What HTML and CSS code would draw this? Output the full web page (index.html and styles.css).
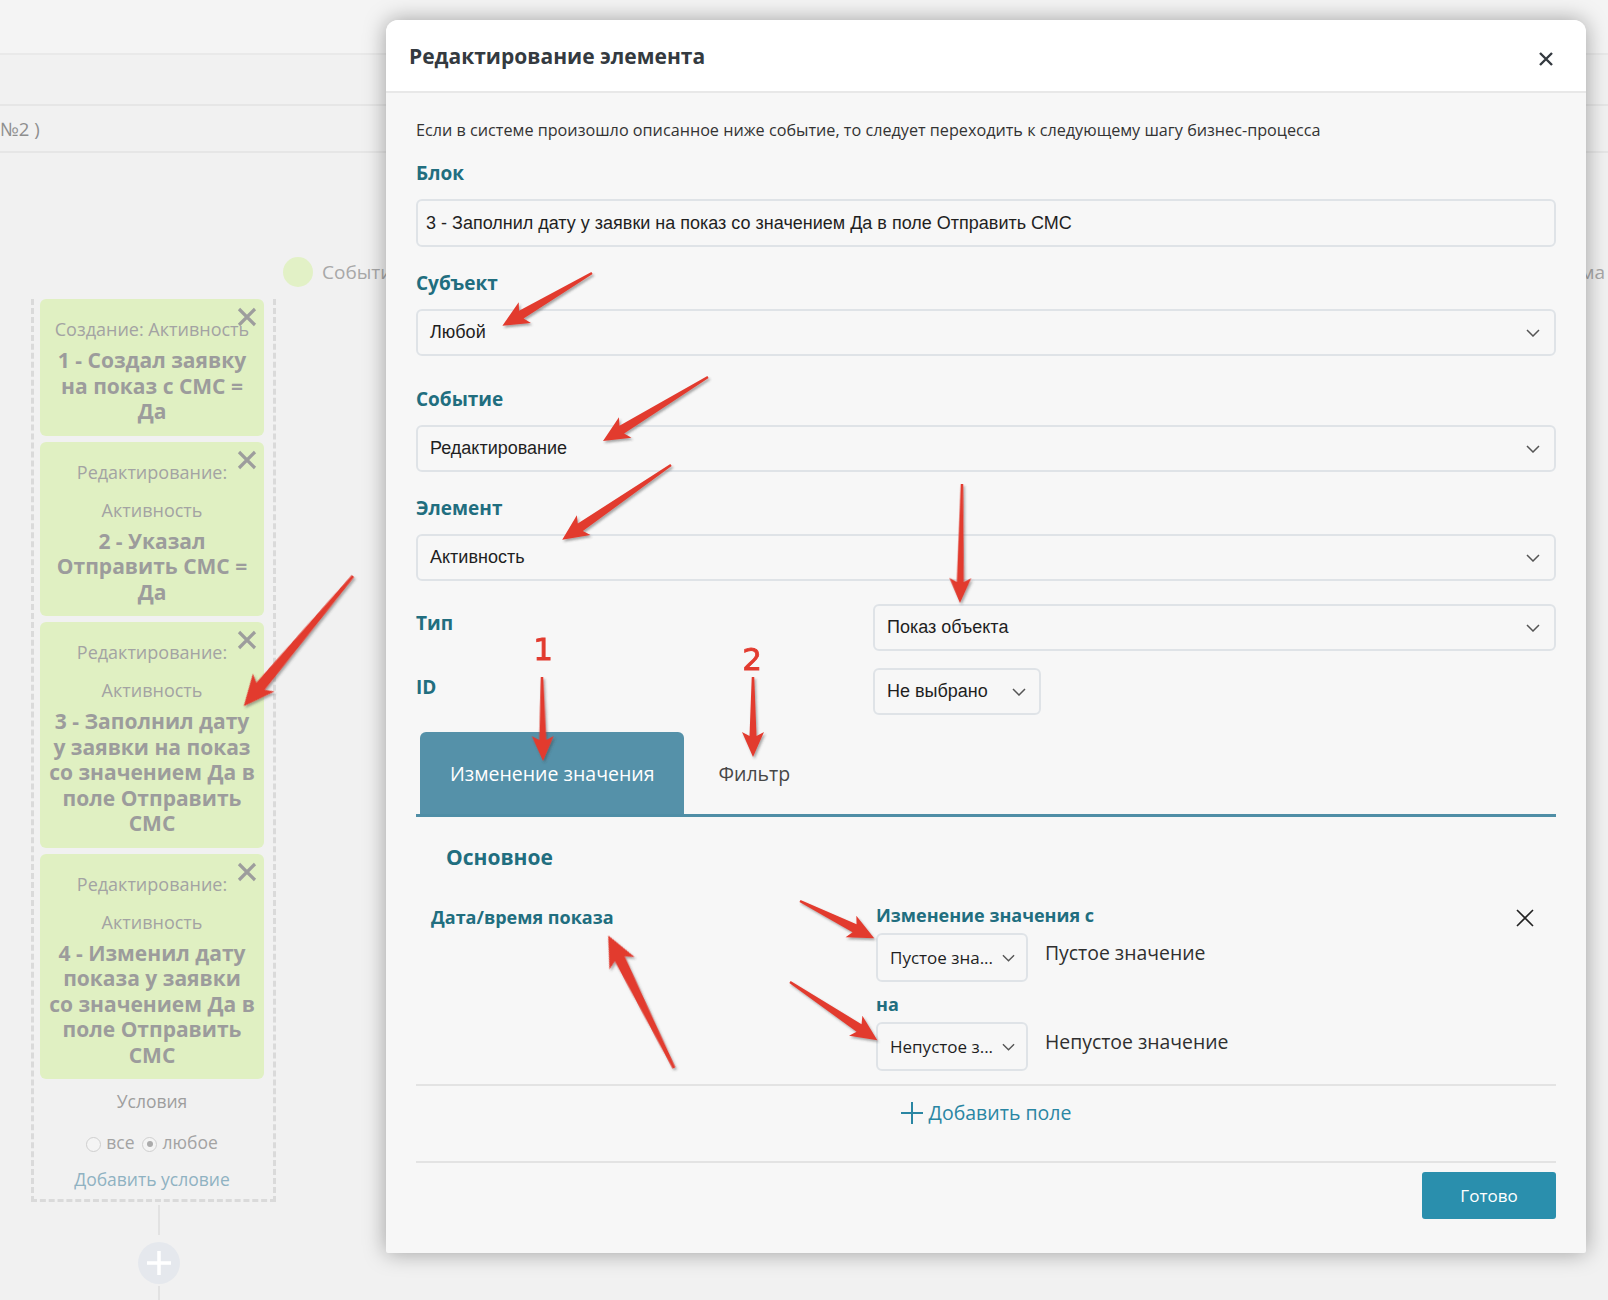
FILE: index.html
```html
<!DOCTYPE html>
<html lang="ru">
  <head>
    <meta charset="UTF-8" />
    <meta name="viewport" content="width=device-width, initial-scale=1.0" />
    <title>Редактирование элемента</title>
    <link rel="stylesheet" href="styles.css">
  </head>
  <body>
    <div class="app">
      <div class="topbar"></div>
      <div class="toolbar"></div>
      <div class="crumbs">№2 )</div>

      <div class="canvas">
        <div class="legend">
          <span class="legend-dot"></span>
          <span class="legend-text">События</span>
          <span class="legend-right">Схема</span>
        </div>

        <div class="column">
          <div class="card">
            <svg class="card-close" width="20" height="20" viewBox="0 0 20 20"><path d="M2 2L18 18M18 2L2 18" /></svg>
            <div class="card-sub">Создание: Активность</div>
            <div class="card-title">1 - Создал заявку на показ с СМС = Да</div>
          </div>
          <div class="card">
            <svg class="card-close" width="20" height="20" viewBox="0 0 20 20"><path d="M2 2L18 18M18 2L2 18" /></svg>
            <div class="card-sub">Редактирование: Активность</div>
            <div class="card-title">2 - Указал Отправить СМС = Да</div>
          </div>
          <div class="card">
            <svg class="card-close" width="20" height="20" viewBox="0 0 20 20"><path d="M2 2L18 18M18 2L2 18" /></svg>
            <div class="card-sub">Редактирование: Активность</div>
            <div class="card-title">3 - Заполнил дату<br>у заявки на показ<br>со значением Да в<br>поле Отправить<br>СМС</div>
          </div>
          <div class="card">
            <svg class="card-close" width="20" height="20" viewBox="0 0 20 20"><path d="M2 2L18 18M18 2L2 18" /></svg>
            <div class="card-sub">Редактирование: Активность</div>
            <div class="card-title">4 - Изменил дату<br>показа у заявки<br>со значением Да в<br>поле Отправить<br>СМС</div>
          </div>

          <div class="cond-title">Условия</div>
          <div class="cond-radios">
            <span class="radio"></span><span>все</span>
            <span class="radio radio-on"></span><span>любое</span>
          </div>
          <div class="cond-add">Добавить условие</div>
        </div>

        <div class="connector">
          <span class="connector-line"></span>
          <span class="connector-plus">
            <svg width="26" height="26" viewBox="0 0 26 26"><path d="M13 1V25M1 13H25" /></svg>
          </span>
          <span class="connector-line"></span>
        </div>
      </div>
    </div>

    <div class="modal">
      <div class="modal-header">
        <h2 class="modal-title">Редактирование элемента</h2>
        <svg class="modal-close" width="14" height="14" viewBox="0 0 14 14"><path d="M1 1L13 13M13 1L1 13" /></svg>
      </div>

      <div class="modal-body">
        <p class="intro">Если в системе произошло описанное ниже событие, то следует переходить к следующему шагу бизнес-процесса</p>

        <div class="field">
          <label class="field-label">Блок</label>
          <div class="input">3 - Заполнил дату у заявки на показ со значением Да в поле Отправить СМС</div>
        </div>

        <div class="field field-wide">
          <label class="field-label">Субъект</label>
          <div class="select">
            <span>Любой</span>
            <svg class="chevron" width="14" height="8" viewBox="0 0 14 8"><path d="M1 1L7 7L13 1" /></svg>
          </div>
        </div>

        <div class="field">
          <label class="field-label">Событие</label>
          <div class="select">
            <span>Редактирование</span>
            <svg class="chevron" width="14" height="8" viewBox="0 0 14 8"><path d="M1 1L7 7L13 1" /></svg>
          </div>
        </div>

        <div class="field field-last">
          <label class="field-label">Элемент</label>
          <div class="select">
            <span>Активность</span>
            <svg class="chevron" width="14" height="8" viewBox="0 0 14 8"><path d="M1 1L7 7L13 1" /></svg>
          </div>
        </div>

        <div class="type-grid">
          <div class="field-label side">Тип</div>
          <div class="select">
            <span>Показ объекта</span>
            <svg class="chevron" width="14" height="8" viewBox="0 0 14 8"><path d="M1 1L7 7L13 1" /></svg>
          </div>
          <div class="field-label side">ID</div>
          <div class="select select-id">
            <span>Не выбрано</span>
            <svg class="chevron" width="14" height="8" viewBox="0 0 14 8"><path d="M1 1L7 7L13 1" /></svg>
          </div>
        </div>

        <div class="tabs">
          <div class="tab tab-active">Изменение значения</div>
          <div class="tab tab-next">Фильтр</div>
        </div>

        <div class="tab-pane">
          <h3 class="section-title">Основное</h3>
          <div class="change-row">
            <div class="change-field">Дата/время показа</div>
            <div class="change-values">
              <div class="value-label">Изменение значения с</div>
              <div class="value-line">
                <div class="select select-small">
                  <span>Пустое зна...</span>
                  <svg class="chevron" width="13" height="8" viewBox="0 0 14 8"><path d="M1 1L7 7L13 1" /></svg>
                </div>
                <span class="value-text">Пустое значение</span>
              </div>
              <div class="value-label value-label-next">на</div>
              <div class="value-line">
                <div class="select select-small">
                  <span>Непустое з...</span>
                  <svg class="chevron" width="13" height="8" viewBox="0 0 14 8"><path d="M1 1L7 7L13 1" /></svg>
                </div>
                <span class="value-text">Непустое значение</span>
              </div>
            </div>
            <svg class="change-remove" width="18" height="18" viewBox="0 0 18 18"><path d="M1 1L17 17M17 1L1 17" /></svg>
          </div>
        </div>

        <div class="divider"></div>
        <div class="add-field">
          <svg width="22" height="22" viewBox="0 0 22 22"><path d="M11 0V22M0 11H22" /></svg>
          <span>Добавить поле</span>
        </div>
        <div class="divider divider-bottom"></div>

        <div class="actions">
          <button type="button" class="btn-done">Готово</button>
        </div>
      </div>
    </div>

    <!-- пометки поверх скриншота -->
    <svg class="marks" width="1608" height="1300" viewBox="0 0 1608 1300">
      <defs>
        <filter id="shade" x="-20%" y="-20%" width="140%" height="140%">
          <feDropShadow dx="1.5" dy="2" stdDeviation="1" flood-color="#444" flood-opacity="0.45" />
        </filter>
      </defs>
      <g class="arrow" filter="url(#shade)">
        <path transform="translate(592 273) rotate(149.5)" d="M0 -1.2L82 -4.5L78 -12L104 0L78 12L82 4.5L0 1.2Z" />
        <path transform="translate(708 377) rotate(148.6)" d="M0 -1.2L101 -4.5L97 -12L123 0L97 12L101 4.5L0 1.2Z" />
        <path transform="translate(671 465) rotate(145.5)" d="M0 -1.2L110 -4.5L106 -12L132 0L106 12L110 4.5L0 1.2Z" />
        <path transform="translate(962 484) rotate(91)" d="M0 -1.2L98 -3.5L94 -11L119 0L94 11L98 3.5L0 1.2Z" />
        <path transform="translate(542 677) rotate(89.3)" d="M0 -1.2L63 -3.5L59 -11L84 0L59 11L63 3.5L0 1.2Z" />
        <path transform="translate(753 677) rotate(90)" d="M0 -1.2L59 -3.5L55 -11L80 0L55 11L59 3.5L0 1.2Z" />
        <path transform="translate(353 576) rotate(130)" d="M0 -1.5L144 -5.5L139 -14L170 0L139 14L144 5.5L0 1.5Z" />
        <path transform="translate(674 1068) rotate(-116.4)" d="M0 -1.5L122 -5.5L117 -14L148 0L117 14L122 5.5L0 1.5Z" />
        <path transform="translate(800 901) rotate(26.6)" d="M0 -1.2L61 -4.5L57 -12L83 0L57 12L61 4.5L0 1.2Z" />
        <path transform="translate(790 982) rotate(33.7)" d="M0 -1.2L83 -4.5L79 -12L105 0L79 12L83 4.5L0 1.2Z" />
      </g>
      <text class="mark-num" x="543" y="660">1</text>
      <text class="mark-num" x="752" y="670">2</text>
    </svg>
  </body>
</html>
```

FILE: styles.css
```css
* {
  box-sizing: border-box;
}

body {
  margin: 0;
  width: 1608px;
  height: 1300px;
  overflow: hidden;
  position: relative;
  font-family: "Open Sans", "Liberation Sans", sans-serif;
  background: #f1f1f1;
}

/* фон: схема бизнес-процесса */
.topbar {
  height: 55px;
  background: #f4f4f4;
  border-bottom: 2px solid #e9e9e9;
}

.toolbar {
  height: 51px;
  border-bottom: 2px solid #e6e6e6;
}

.crumbs {
  height: 47px;
  border-bottom: 2px solid #e6e6e6;
  line-height: 45px;
  font-size: 18.5px;
  color: #8e8e8e;
}

.canvas {
  padding-top: 104px;
}

.legend {
  display: flex;
  align-items: center;
  height: 30px;
  padding-left: 283px;
}

.legend-dot {
  width: 30px;
  height: 30px;
  border-radius: 50%;
  background: #e2f1c6;
}

.legend-text,
.legend-right {
  font-size: 19px;
  color: #a8a8a8;
}

.legend-text {
  margin-left: 9px;
}

.legend-right {
  margin-left: auto;
  margin-right: 3px;
}

.column {
  width: 245px;
  margin: 12px 0 0 31px;
  padding: 0 9px 8px 6px;
  border: 3px dashed #dadada;
  border-top: 0;
  text-align: center;
}

.card {
  position: relative;
  margin-bottom: 6px;
  padding: 11px 6px;
  border-radius: 6px;
  background: #e0f0c2;
}

.card-close {
  position: absolute;
  top: 8px;
  right: 7px;
}

.card-close path {
  stroke: #9d9d9d;
  stroke-width: 3.2;
  fill: none;
}

.card-sub {
  font-size: 18px;
  line-height: 38px;
  color: #a3a3a3;
}

.card-title {
  font-size: 21px;
  line-height: 25.5px;
  font-weight: 700;
  color: #9c9c9c;
}

.cond-title {
  margin-top: 10px;
  font-size: 17.5px;
  line-height: 24px;
  color: #9e9e9e;
}

.cond-radios {
  display: flex;
  align-items: center;
  justify-content: center;
  gap: 5px;
  margin-top: 17px;
  font-size: 17.5px;
  line-height: 24px;
  color: #a3a3a3;
}

.radio {
  width: 15px;
  height: 15px;
  margin-top: 4px;
  border: 1px solid #cfcfcf;
  border-radius: 50%;
  background: #f4f4f4;
  display: flex;
  align-items: center;
  justify-content: center;
}

.radio-on {
  margin-left: 3px;
}

.radio-on::after {
  content: "";
  width: 6px;
  height: 6px;
  border-radius: 50%;
  background: #ababab;
}

.cond-add {
  margin-top: 13px;
  font-size: 17.5px;
  line-height: 24px;
  color: #8fb2c2;
}

.connector {
  display: flex;
  flex-direction: column;
  align-items: center;
  width: 42px;
  margin-left: 138px;
  padding-top: 3px;
}

.connector-line {
  width: 2px;
  height: 30px;
  background: #e2e2e2;
}

.connector-plus {
  width: 42px;
  height: 42px;
  margin: 7px 0 2px;
  border-radius: 50%;
  background: #e5e8ed;
  display: flex;
  align-items: center;
  justify-content: center;
}

.connector-plus path {
  stroke: #fff;
  stroke-width: 3.5;
}

/* модальное окно */
.modal {
  position: absolute;
  left: 386px;
  top: 20px;
  width: 1200px;
  background: #f7f7f7;
  border-radius: 12px 12px 2px 2px;
  box-shadow: 0 0 22px rgba(0, 0, 0, 0.35);
}

.modal-header {
  height: 73px;
  padding: 2px 33px 0 23px;
  display: flex;
  align-items: center;
  justify-content: space-between;
  background: #fff;
  border-bottom: 2px solid #e8e8e8;
  border-radius: 12px 12px 0 0;
}

.modal-title {
  margin: 0 0 2px;
  font-size: 21px;
  font-weight: 700;
  color: #343a40;
}

.modal-close {
  margin-top: 4px;
}

.modal-close path {
  stroke: #343a40;
  stroke-width: 2.4;
}

.modal-body {
  padding: 27px 30px 34px;
}

.intro {
  margin: 0 0 21px;
  font-size: 16.2px;
  line-height: 20px;
  color: #333;
}

.field {
  margin-bottom: 24px;
}

.field-wide {
  margin-bottom: 31px;
}

.field-last {
  margin-bottom: 23px;
}

.field-label {
  display: block;
  margin-bottom: 14px;
  font-size: 19px;
  line-height: 24px;
  font-weight: 700;
  color: #216e7f;
}

.field-label.side {
  margin: 0;
  padding-top: 7px;
}

.input,
.select {
  height: 48px;
  padding: 0 14px 0 12px;
  display: flex;
  align-items: center;
  border: 2px solid #dfe3e7;
  border-radius: 6px;
  background: #f7f7f7;
  font-family: "Liberation Sans", Arial, sans-serif;
  font-size: 18px;
  color: #1f1f1f;
}

.input {
  padding-left: 8px;
}

.select {
  height: 47px;
  justify-content: space-between;
}

.chevron path {
  fill: none;
  stroke: #555;
  stroke-width: 1.5;
}

.type-grid {
  display: grid;
  grid-template-columns: 457px 1fr;
  row-gap: 17px;
  align-items: start;
}

.select-id {
  width: 168px;
  padding-right: 13px;
}

.tabs {
  display: flex;
  margin-top: 17px;
  padding-left: 4px;
  border-bottom: 3px solid #4f8ea6;
}

.tab {
  height: 82px;
  padding: 0 30px;
  display: flex;
  align-items: center;
  font-size: 19.5px;
  color: #474747;
}

.tab-active {
  background: #5591a9;
  color: #fff;
  border-radius: 6px 6px 0 0;
}

.tab-next {
  padding-left: 34px;
}

.section-title {
  margin: 26px 0 0 30px;
  font-size: 21px;
  line-height: 28px;
  font-weight: 700;
  color: #216e7f;
}

.change-row {
  display: grid;
  grid-template-columns: 445px 1fr auto;
  margin-top: 32px;
  padding: 0 22px 0 15px;
}

.change-field,
.value-label {
  font-size: 18px;
  line-height: 24px;
  font-weight: 700;
  color: #216e7f;
}

.change-field {
  padding-top: 2px;
}

.value-label-next {
  margin-top: 10px;
}

.value-line {
  display: flex;
  align-items: flex-start;
  margin-top: 6px;
}

.select-small {
  width: 152px;
  height: 49px;
  padding: 0 11px 0 12px;
  font-family: "Open Sans", sans-serif;
  font-size: 17px;
}

.value-text {
  margin-left: 17px;
  padding-top: 8px;
  font-size: 19.4px;
  line-height: 24px;
  color: #2f2f2f;
}

.change-remove {
  margin-top: 6px;
}

.change-remove path {
  stroke: #222;
  stroke-width: 1.6;
}

.divider {
  height: 2px;
  margin-top: 13px;
  background: #e3e3e3;
}

.divider-bottom {
  margin-top: 34px;
}

.add-field {
  margin-top: 13px;
  display: flex;
  align-items: center;
  justify-content: center;
  gap: 6px;
  font-size: 19.5px;
  line-height: 28px;
  color: #2a86a3;
}

.add-field path {
  stroke: #2a86a3;
  stroke-width: 2;
}

.actions {
  display: flex;
  justify-content: flex-end;
  margin-top: 9px;
}

.btn-done {
  width: 134px;
  height: 47px;
  border: none;
  border-radius: 3px;
  background: #2a8fad;
  color: #fff;
  font-family: "Open Sans", sans-serif;
  font-size: 17px;
}

/* красные стрелки и цифры */
.marks {
  position: absolute;
  left: 0;
  top: 0;
  pointer-events: none;
}

.arrow path {
  fill: #e23b2f;
}

.mark-num {
  font-family: "DejaVu Sans", sans-serif;
  font-size: 31px;
  fill: #e23b2f;
  stroke: #e23b2f;
  stroke-width: 0.8;
  text-anchor: middle;
}
```
